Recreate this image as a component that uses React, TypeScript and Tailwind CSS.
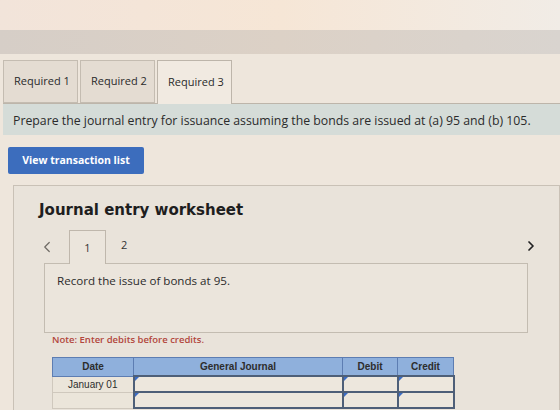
import { ChevronLeft, ChevronRight } from "lucide-react";

const TABS = ["Required 1", "Required 2", "Required 3"];

function ReqTabs() {
  return (
    <div className="flex items-end pl-[3px] gap-[2px]">
      {TABS.map((t, i) => {
        const active = i === TABS.length - 1;
        return (
          <div
            key={t}
            className={
              active
                ? "h-[44px] w-[75px] border border-b-0 border-[#bdb5aa] bg-[#f1eae1] flex items-center pl-[10px] whitespace-nowrap text-[11px] text-[#2a2a2a] -mb-px relative z-10"
                : "h-[43px] w-[75px] border border-[#c4bcb1] bg-[#e4dcd2] flex items-center pl-[10px] whitespace-nowrap text-[11px] text-[#2a2a2a]"
            }
          >
            {t}
          </div>
        );
      })}
    </div>
  );
}

function EntryTable() {
  const cell = "border-2 border-[#4e5f78] bg-[#ede7dd] relative";
  return (
    <table className="border-collapse text-[10px] font-['Liberation_Sans',sans-serif] text-[#2d2d2d]">
      <thead>
        <tr className="h-[19px] bg-[#8fb0dc] font-bold">
          <th className="w-[81px] border border-[#5d7db2] font-bold">Date</th>
          <th className="w-[209px] border border-[#5d7db2] font-bold">General Journal</th>
          <th className="w-[55px] border border-[#5d7db2] font-bold">Debit</th>
          <th className="w-[56px] border border-[#5d7db2] font-bold">Credit</th>
        </tr>
      </thead>
      <tbody>
        {["January 01", ""].map((d, i) => (
          <tr key={i} className="h-[16px]">
            <td className="border border-[#cfc8bd] bg-[#ebe5da] text-center">{d}</td>
            {[0, 1, 2].map((c) => (
              <td key={c} className={cell}>
                {/* little blue marker in each input's corner */}
                <span className="absolute left-0 top-0 w-0 h-0 border-t-[4px] border-t-[#3b6cc4] border-r-[4px] border-r-transparent" />
              </td>
            ))}
          </tr>
        ))}
      </tbody>
    </table>
  );
}

export default function App() {
  return (
    <div className="w-[560px] h-[410px] overflow-hidden bg-[#eee6dc] font-['Open_Sans',sans-serif] relative">
      {/* glare strip and grey header band */}
      <div className="h-[30px] bg-gradient-to-r from-[#f2e4da] via-[#f6e6d6] to-[#f1ece6]" />
      <div className="h-[24px] bg-gradient-to-r from-[#d6cec7] via-[#dcd1c6] to-[#d9d4cf]" />

      <div className="pt-[6px]">
        <ReqTabs />
        <div className="ml-[3px] h-[32px] bg-[#d5dcd8] border-t border-[#bdb5aa] flex items-center pl-[10px] pt-[4px] text-[12.3px] text-[#2b2b2b]">
          Prepare the journal entry for issuance assuming the bonds are issued at (a) 95 and (b) 105.
        </div>

        <div className="pl-[8px] pt-[11px]">
          <button className="h-[27px] w-[136px] rounded-[2px] bg-[#3c6dbd] text-white text-[10.5px] font-bold">
            View transaction list
          </button>
        </div>

        <div className="ml-[13px] mt-[11px] border border-[#c9c1b6] bg-[#e9e3da] h-[240px] pl-[25px] pt-[14px]">
          <h2 className="font-['DejaVu_Sans',sans-serif] font-bold text-[15px] text-[#1e1e1e] leading-[20px]">
            Journal entry worksheet
          </h2>

          <div className="mt-[9px] flex items-end h-[34px] pr-[20px]">
            <ChevronLeft className="w-[18px] h-[18px] text-[#6f6a64] mb-[7px] -ml-[1px]" strokeWidth={1.6} />
            <div className="ml-[13px] w-[37px] h-[34px] border border-b-0 border-[#bfb7ac] bg-[#ebe5dc] flex items-center justify-center text-[11px] text-[#333] -mb-px relative z-10">
              1
            </div>
            <div className="ml-[15px] mb-[10px] text-[11px] text-[#333]">2</div>
            <ChevronRight className="ml-auto w-[16px] h-[16px] text-[#222] mb-[9px]" strokeWidth={2.6} />
          </div>

          <div className="ml-[5px] w-[484px] h-[70px] border border-[#c3bcb1] bg-[#ebe5dc] pl-[12px] pt-[8px] text-[11.6px] text-[#2b2b2b]">
            Record the issue of bonds at 95.
          </div>

          <div className="ml-[13px] mt-0 text-[9.5px] text-[#b2463c] font-semibold">
            Note: Enter debits before credits.
          </div>

          <div className="ml-[13px] mt-[9px]">
            <EntryTable />
          </div>
        </div>
      </div>
    </div>
  );
}
